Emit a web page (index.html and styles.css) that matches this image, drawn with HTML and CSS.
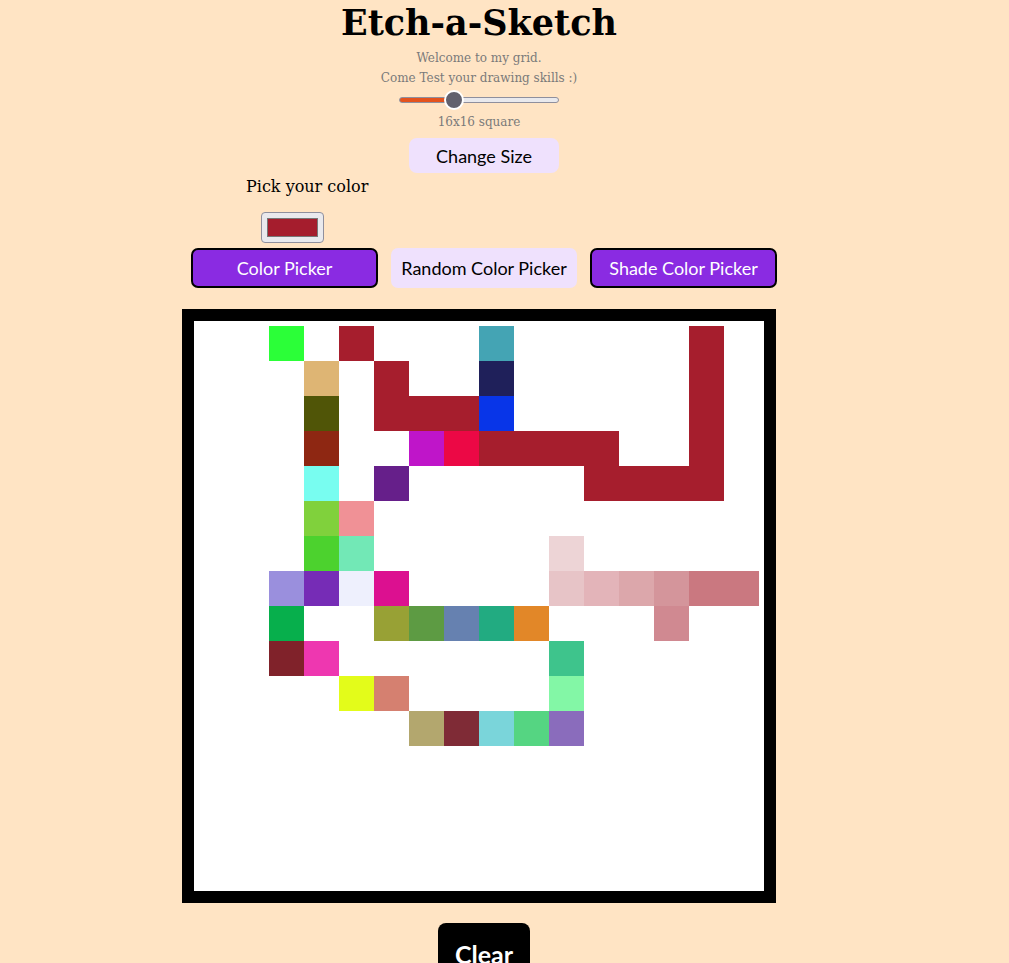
FILE: index.html
```html
<!DOCTYPE html>
<html lang="en">
<head>
<meta charset="utf-8">
<title>Etch-a-Sketch</title>
<link rel="stylesheet" href="styles.css">
</head>
<body>
<main class="app">
  <h1 class="title">Etch-a-Sketch</h1>
  <p class="intro">Welcome to my grid.<br>Come Test your drawing skills :)</p>
  <input class="size-slider" type="range" min="1" max="48" value="16" style="--fill: 34%">
  <p class="size-label">16x16 square</p>
  <button class="btn btn-light change-size">Change Size</button>
  <div class="picker">
    <p class="picker-label">Pick your color</p>
    <input class="color-input" type="color" value="#a51d2d">
  </div>
  <div class="modes">
    <button class="btn mode mode-active">Color Picker</button>
    <button class="btn mode mode-random btn-light">Random Color Picker</button>
    <button class="btn mode mode-active">Shade Color Picker</button>
  </div>
  <div class="board" id="board"></div>
  <button class="clear">Clear</button>
</main>
<script src="script.js"></script>
</body>
</html>
```

FILE: styles.css
```css
* { box-sizing: border-box; }

body {
  margin: 0;
  background: #ffe4c4;
  font-family: "DejaVu Serif", serif;
  color: #000;
}

.app {
  width: 958px;
  display: flex;
  flex-direction: column;
  align-items: center;
}

.title {
  margin: 2px 0 0;
  font-size: 35px;
  line-height: 42px;
  font-weight: bold;
}

.intro {
  margin: 4px 0 0;
  font-size: 12px;
  line-height: 20px;
  color: #7a7a7a;
  text-align: center;
}

.size-slider {
  -webkit-appearance: none;
  appearance: none;
  margin: 2px 0 0;
  width: 160px;
  height: 20px;
  background: transparent;
}

.size-slider::-webkit-slider-runnable-track {
  box-sizing: border-box;
  height: 6px;
  border: 1px solid #8f8f9d;
  border-radius: 3px;
  background: linear-gradient(to right, #e4531d 0 var(--fill), #e9e9ed var(--fill) 100%);
}

.size-slider::-webkit-slider-thumb {
  -webkit-appearance: none;
  appearance: none;
  box-sizing: border-box;
  width: 20px;
  height: 20px;
  margin-top: -8px;
  border-radius: 50%;
  background: #62616d;
  border: 2px solid #fff;
}

.size-label {
  margin: 2px 0 0;
  font-size: 12px;
  line-height: 20px;
  color: #7a7a7a;
}

.btn {
  font-family: Lato, "Noto Sans", sans-serif;
  font-size: 18px;
  cursor: pointer;
}

.btn-light {
  background: #efe1fd;
  color: #000;
  border: 2px solid #efe1fd;
}

.change-size {
  margin: 6px 0 0 10px;
  width: 150px;
  height: 35px;
  border-radius: 8px;
}

.picker {
  align-self: stretch;
  display: flex;
  flex-direction: column;
  align-items: flex-start;
  padding-left: 246px;
}

.picker-label {
  margin: 4px 0 0;
  font-size: 16px;
  line-height: 20px;
}

.color-input {
  -webkit-appearance: none;
  appearance: none;
  margin: 15px 0 0 15px;
  width: 63px;
  height: 31px;
  padding: 5px;
  border: 1px solid #8f8f9d;
  border-radius: 4px;
  background: #e9e9ed;
  cursor: pointer;
}

.color-input::-webkit-color-swatch-wrapper { padding: 0; }
.color-input::-webkit-color-swatch {
  border: 1px solid #777;
  border-radius: 0;
}

.modes {
  margin: 5px 0 0 10px;
  display: flex;
  gap: 13px;
}

.mode {
  width: 187px;
  height: 40px;
  border-radius: 7px;
}

.mode-random { width: 186px; }

.mode-active {
  background: #8a2be2;
  color: #fff;
  border: 2px solid #000;
}

.board {
  margin-top: 21px;
  display: grid;
  grid-template-columns: repeat(16, 35px);
  grid-auto-rows: 35px;
  padding: 5px;
  border: 12px solid #000;
  background: #fff;
}

.cell { background: #fff; }

.clear {
  margin: 20px 0 0 10px;
  width: 92px;
  height: 52px;
  border: none;
  border-radius: 8px;
  background: #000;
  color: #fff;
  font-family: Lato, "Noto Sans", sans-serif;
  font-weight: bold;
  font-size: 25px;
  padding-top: 10px;
}
```

FILE: script.js
```js
const painted = {
  "0-2": "#2bff38", "0-4": "#a61e2d", "0-8": "#44a4b4", "0-14": "#a61e2d",
  "1-3": "#deb574", "1-5": "#a61e2d", "1-8": "#1f205a", "1-14": "#a61e2d",
  "2-3": "#505507", "2-5": "#a61e2d", "2-6": "#a61e2d", "2-7": "#a61e2d", "2-8": "#0835e8", "2-14": "#a61e2d",
  "3-3": "#8e2712", "3-6": "#bf15c9", "3-7": "#ec0845", "3-8": "#a61e2d", "3-9": "#a61e2d", "3-10": "#a61e2d", "3-11": "#a61e2d", "3-14": "#a61e2d",
  "4-3": "#78fdf0", "4-5": "#661f8a", "4-11": "#a61e2d", "4-12": "#a61e2d", "4-13": "#a61e2d", "4-14": "#a61e2d",
  "5-3": "#80d13c", "5-4": "#f09196",
  "6-3": "#4cd22e", "6-4": "#72e8b6", "6-10": "#edd4d6",
  "7-2": "#9a8fdd", "7-3": "#762cb6", "7-4": "#eef0fd", "7-5": "#dc1090", "7-10": "#e7c4c7", "7-11": "#e3b4b9", "7-12": "#dca7ab", "7-13": "#d4959b", "7-14": "#ca7880", "7-15": "#ca7880",
  "8-2": "#07af4c", "8-5": "#98a135", "8-6": "#5d9b43", "8-7": "#6681b0", "8-8": "#22ab81", "8-9": "#e28728", "8-13": "#d08991",
  "9-2": "#80222a", "9-3": "#ee37b0", "9-10": "#3ec48c",
  "10-4": "#e3fc1a", "10-5": "#d58070", "10-10": "#83f7a6",
  "11-6": "#b3a76e", "11-7": "#7f2b36", "11-8": "#7ad5da", "11-9": "#55d582", "11-10": "#8a6cbc"
};
const board = document.getElementById("board");
for (let r = 0; r < 16; r++) {
  for (let c = 0; c < 16; c++) {
    const cell = document.createElement("div");
    cell.className = "cell";
    const color = painted[r + "-" + c];
    if (color) cell.style.background = color;
    board.appendChild(cell);
  }
}
```
